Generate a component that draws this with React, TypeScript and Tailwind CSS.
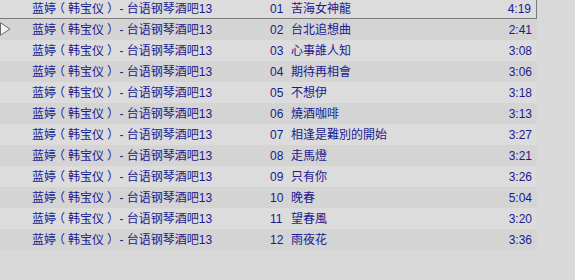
const tracks = [
  { no: '01', title: '苦海女神龍', time: '4:19' },
  { no: '02', title: '台北追想曲', time: '2:41' },
  { no: '03', title: '心事誰人知', time: '3:08' },
  { no: '04', title: '期待再相會', time: '3:06' },
  { no: '05', title: '不想伊', time: '3:18' },
  { no: '06', title: '燒酒咖啡', time: '3:13' },
  { no: '07', title: '相逢是難別的開始', time: '3:27' },
  { no: '08', title: '走馬燈', time: '3:21' },
  { no: '09', title: '只有你', time: '3:26' },
  { no: '10', title: '晚春', time: '5:04' },
  { no: '11', title: '望春風', time: '3:20' },
  { no: '12', title: '雨夜花', time: '3:36' },
];

function PlayMarker() {
  return (
    <svg width="11" height="14" viewBox="0 0 11 14" className="block -mt-[1px]">
      <path d="M0.5 0.8 L10 7 L0.5 13.2 Z" fill="#f4f4f4" stroke="#6a6a6a" strokeWidth="1" />
    </svg>
  );
}

// full-width parens drawn centred in their cell, like the original player font
function Artist() {
  return (
    <>
      蓝婷<span className="mx-[3px] [font-feature-settings:'halt']">（</span>韩宝仪
      <span className="mx-[3px] [font-feature-settings:'halt']">）</span> - 台语钢琴酒吧13
    </>
  );
}

export default function App() {
  return (
    <div
      className="w-[575px] h-[280px] overflow-hidden bg-[#d9d9d9] text-[12px] text-[#1a1a90]"
      style={{ fontFamily: '"Liberation Sans", "Noto Sans CJK SC", sans-serif' }}
    >
      <div className="w-[537px] -mt-[1px]">
        {tracks.map((t, i) => (
          <div
            key={t.no}
            className={
              'flex items-center box-border leading-none ' +
              (i === 0 ? 'h-[20px] ' : 'h-[21px] ') +
              (i % 2 === 0 ? 'bg-[#dcdcdc] ' : 'bg-[#d4d4d4] ') +
              (i === 0 ? 'border-b border-r border-[#7c7c7c]' : '')
            }
          >
            <div className="w-[32px] shrink-0">{i === 1 && <PlayMarker />}</div>
            <div className="w-[238px] shrink-0 whitespace-nowrap">
              <Artist />
            </div>
            <div className="w-[21px] shrink-0">{t.no}</div>
            <div className="flex-1 whitespace-nowrap">{t.title}</div>
            <div className="pr-[5px] text-right">{t.time}</div>
          </div>
        ))}
      </div>
    </div>
  );
}
